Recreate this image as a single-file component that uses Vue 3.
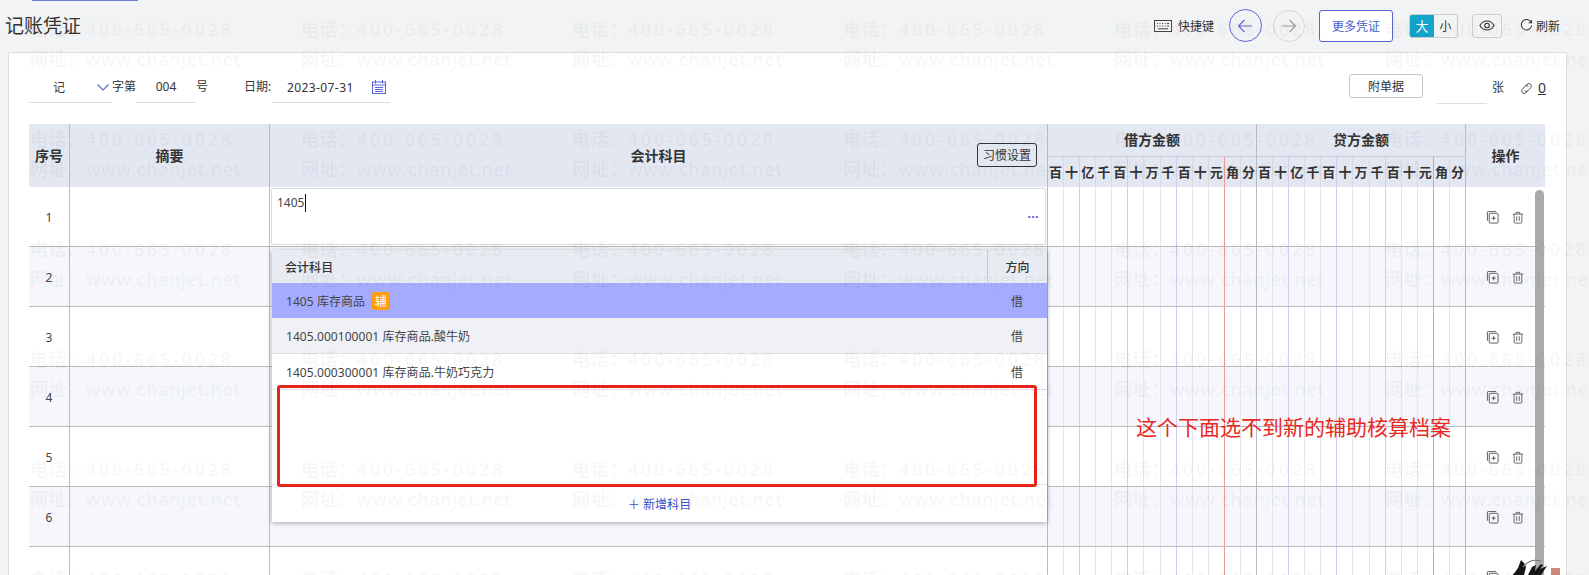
<script setup>
const marks = Array.from({ length: 42 }, (_, i) => i)
const digits = ['百', '十', '亿', '千', '百', '十', '万', '千', '百', '十', '元', '角', '分']
const rows = [1, 2, 3, 4, 5, 6, 7]
const digitClass = (i) => {
  if (i === 12) return 'd-end'
  if (i === 10) return 'd-red'
  if (i === 1 || i === 4 || i === 7) return 'd-purple'
  return ''
}
</script>

<template>
  <div class="page">
    <div class="topline"></div>
    <header class="pagehead">
      <h1 class="title">记账凭证</h1>
      <div class="tools">
        <span class="shortcut">
          <svg class="kb" viewBox="0 0 18 14" width="18" height="14" fill="none" stroke="#444" stroke-width="1">
            <rect x="0.5" y="1.5" width="17" height="11" />
            <path d="M3 4.5h1M5.5 4.5h1M8 4.5h1M10.5 4.5h1M13 4.5h2M3 7h1M5.5 7h1M8 7h1M10.5 7h1M13 7h2M4 9.8h10" />
          </svg>
          快捷键
        </span>
        <button class="circle active">
          <svg viewBox="0 0 16 16" width="16" height="16" fill="none" stroke="#5a64d8" stroke-width="1.1"><path d="M15 8H1.5M7.5 2L1.5 8l6 6" /></svg>
        </button>
        <button class="circle">
          <svg viewBox="0 0 16 16" width="16" height="16" fill="none" stroke="#999" stroke-width="1.1"><path d="M1 8h13.5M8.5 2l6 6-6 6" /></svg>
        </button>
        <button class="more">更多凭证</button>
        <div class="size">
          <span class="on">大</span><span class="off">小</span>
        </div>
        <button class="eye">
          <svg viewBox="0 0 18 12" width="16" height="11" fill="none" stroke="#333" stroke-width="1.2">
            <path d="M1 6c2-3.4 4.8-5 8-5s6 1.6 8 5c-2 3.4-4.8 5-8 5S3 9.4 1 6z" />
            <circle cx="9" cy="6" r="2.6" />
          </svg>
        </button>
        <span class="refresh">
          <svg viewBox="0 0 14 14" width="13" height="13" fill="none" stroke="#333" stroke-width="1.1">
            <path d="M12 3.5A5.6 5.6 0 1 0 12.6 7M12.3 1v3h-3" />
          </svg>
          刷新
        </span>
      </div>
    </header>

    <main class="card">
      <div class="form">
        <div class="f-left">
          <div class="type"><span class="type-val">记</span>
            <svg class="chev" viewBox="0 0 12 7" width="12" height="7" fill="none" stroke="#5a64d8" stroke-width="1.1"><path d="M.5.5L6 6 11.5.5" /></svg>
          </div>
          <span class="lbl zi">字第</span>
          <div class="num">004</div>
          <span class="lbl hao">号</span>
          <span class="lbl date-lbl">日期:</span>
          <div class="date">
            <span class="date-val">2023-07-31</span>
            <svg class="cal" viewBox="0 0 14 14" width="14" height="14" fill="none" stroke="#5a64d8" stroke-width="1">
              <rect x="0.5" y="2" width="13" height="11.5" />
              <path d="M3.5 0v3.500M10.5 0v3.500M.5 5h13M3 7.500h8M3 9.500h8M3 11.500h8" />
            </svg>
          </div>
        </div>
        <div class="f-right">
          <button class="attach">附单据</button>
          <div class="pages"></div>
          <span class="lbl zhang">张</span>
          <svg class="link" viewBox="0 0 14 14" width="13" height="13" fill="none" stroke="#444" stroke-width="1">
            <path d="M6.2 4.2l1.600-1.900a2.600 2.600 0 0 1 3.900 3.400L8.600 9.400a2.400 2.400 0 0 1-3.500-.2" />
            <path d="M7.800 9.800l-1.600 1.900a2.600 2.600 0 0 1-3.900-3.400L5.400 4.600a2.400 2.400 0 0 1 3.500.2" />
          </svg>
          <span class="zero">0</span>
        </div>
      </div>

      <section class="table">
        <div class="thead">
          <div class="th plain">序号</div>
          <div class="th plain">摘要</div>
          <div class="th plain">会计科目<button class="habit">习惯设置</button></div>
          <div v-for="g in ['借方金额', '贷方金额']" :key="g" class="th money-th">
            <div class="money-title">{{ g }}</div>
            <div class="digits">
              <span v-for="(d, i) in digits" :key="i" class="digit" :class="digitClass(i)">{{ d }}</span>
            </div>
          </div>
          <div class="th plain last">操作</div>
        </div>
        <div v-for="r in rows" :key="r" class="tr" :class="{ even: r % 2 === 0 }">
          <div class="td seq">{{ r < 7 ? r : '' }}</div>
          <div class="td"></div>
          <div class="td account">
            <div v-if="r === 1" class="acc-input">
              <span class="typed">1405</span>
              <span class="dots">...</span>
            </div>
          </div>
          <div v-for="m in 2" :key="m" class="td money">
            <span v-for="(d, i) in digits" :key="i" class="cell" :class="digitClass(i)"></span>
          </div>
          <div class="td ops">
            <svg viewBox="0 0 14 14" width="13" height="13" fill="none" stroke="#555" stroke-width="1">
              <path d="M1.5 10.500v-9a1 1 0 0 1 1-1h8.500" />
              <rect x="3.5" y="2.5" width="9.5" height="10.5" rx="1" />
              <path d="M6 7.700h4.500M8.200 5.500v4.500" />
            </svg>
            <svg viewBox="0 0 14 14" width="12" height="13" fill="none" stroke="#555" stroke-width="1">
              <path d="M1 3h12M5 3V1h4v2M2.500 3v9.500a1 1 0 0 0 1 1h7a1 1 0 0 0 1-1V3M5.500 5.500v5.500M8.500 5.500v5.500" />
            </svg>
          </div>
        </div>

        <div class="scroll"></div>

        <div class="dropdown">
          <div class="dd-head"><span>会计科目</span><span class="dd-dir">方向</span></div>
          <div class="dd-row sel">
            <span class="dd-name">1405 库存商品 <i class="badge">辅</i></span><span class="dd-val">借</span>
          </div>
          <div class="dd-row alt">
            <span class="dd-name">1405.000100001 库存商品.酸牛奶</span><span class="dd-val">借</span>
          </div>
          <div class="dd-row">
            <span class="dd-name">1405.000300001 库存商品.牛奶巧克力</span><span class="dd-val">借</span>
          </div>
          <div class="dd-space"></div>
          <div class="dd-foot">＋ 新增科目</div>
        </div>
      </section>
    </main>

    <div class="redbox"></div>
    <div class="note">这个下面选不到新的辅助核算档案</div>

    <svg class="mascot" viewBox="0 0 48 16" width="48" height="16">
      <path d="M1 16l5-7 3-8 3 3 2 4-2 8z" fill="#161616" />
      <path d="M11 8c5-6 11-8 18-6" stroke="#777" stroke-width="1.2" fill="none" />
      <path d="M16 16l4-8 4-2-1 6 6-7 2 1-3 4 7-3-6 9z" fill="#161616" />
      <rect x="39" y="9" width="9" height="7" fill="#c98a7a" />
    </svg>

    <div class="watermark" aria-hidden="true">
      <div v-for="m in marks" :key="m" class="mark">
        <div class="wm-tel"><span class="wm-cjk">电话：</span>400-665-0028</div>
        <div class="wm-web"><span class="wm-cjk">网址：</span>www.chanjet.net</div>
      </div>
    </div>
  </div>
</template>

<style>
html, body { margin: 0; background: #f2f3f5; }
</style>

<style scoped>
.page {
  position: relative;
  width: 1589px;
  height: 575px;
  overflow: hidden;
  background: #f2f3f5;
  display: flex;
  flex-direction: column;
  color: #333;
  font-family: "Noto Sans", "Noto Sans CJK SC", sans-serif;
  font-size: 12px;
}
button { font-family: inherit; padding: 0; cursor: pointer; background: none; }
.topline { flex: none; height: 1px; width: 106px; margin-left: 32px; background: #6f80d4; }
.pagehead { flex: none; height: 51px; display: flex; align-items: center; justify-content: space-between; padding: 0 29px 2px 5px; box-sizing: border-box; }
.title { margin: 0; font-size: 19px; font-weight: 400; color: #333; line-height: 28px; }
.tools { display: flex; align-items: center; }
.shortcut { display: flex; align-items: center; gap: 6px; margin-right: 15px; }
.circle { width: 32px; height: 32px; border-radius: 50%; border: 1px solid #d6d8dc; display: flex; align-items: center; justify-content: center; margin-right: 10px; box-sizing: border-box; }
.circle.active { width: 33px; height: 33px; border-color: #5a64d8; margin-right: 11px; }
.more { width: 74px; height: 32px; border: 1px solid #5a64d8; border-radius: 3px; background: #fff; color: #4a5bc8; font-size: 12px; margin: 0 16px 0 4px; }
.size { display: flex; width: 49px; height: 24px; border: 1px solid #ccc; border-radius: 3px; overflow: hidden; box-sizing: border-box; margin-right: 14px; }
.size span { flex: 1; display: flex; align-items: center; justify-content: center; }
.size .on { background: #12a5c9; color: #fff; font-size: 13px; flex: 0 0 24px; }
.eye { width: 30px; height: 24px; border: 1px solid #ccc; border-radius: 3px; display: flex; align-items: center; justify-content: center; margin-right: 18px; }
.refresh { display: flex; align-items: center; gap: 3px; }

.card { flex: 1; margin: 0 22px 0 8px; background: #fff; border: 1px solid #dcdee2; border-bottom: 0; padding: 0 20px; min-height: 0; }
.form { height: 71px; display: flex; justify-content: space-between; }
.f-left { display: flex; align-items: flex-start; padding-top: 19px; }
.type { width: 83px; height: 31px; border-bottom: 1px solid #ddd; box-sizing: border-box; display: flex; align-items: center; padding-left: 24px; }
.type-val { flex: 1; }
.chev { margin-right: 3px; }
.lbl { line-height: 29px; white-space: nowrap; }
.zi { width: 24px; }
.num { width: 60px; height: 31px; box-sizing: border-box; border-bottom: 1px solid #ddd; text-align: center; line-height: 29px; }
.hao { margin-right: 36px; }
.date-lbl { width: 28px; }
.date { width: 118px; height: 31px; box-sizing: border-box; border-bottom: 1px solid #ddd; display: flex; align-items: center; padding: 0 4px 0 15px; justify-content: space-between; }
.date-val { letter-spacing: 0.4px; }
.f-right { display: flex; align-items: flex-start; padding-top: 21px; position: relative; }
.attach { width: 74px; height: 24px; border: 1px solid #c4c6ca; border-radius: 3px; background: #fff; color: #333; font-size: 12px; margin-right: 14px; }
.pages { width: 50px; height: 30px; border-bottom: 1px solid #ddd; box-sizing: border-box; margin-right: 5px; }
.zhang { margin-right: 16px; line-height: 28px; }
.link { margin-top: 8px; margin-right: 5px; }
.zero { text-decoration: underline; line-height: 27px; font-size: 14px; }

.table { position: relative; width: 1516px; }
.thead, .tr { display: grid; grid-template-columns: 41px 200px 778px 209px 209px 79px; }
.thead { height: 63px; background: #e3e7f2; }
.th { border-right: 1px solid #b8bac0; display: flex; align-items: center; justify-content: center; font-weight: 700; font-size: 14px; color: #333; box-sizing: border-box; position: relative; }
.th.plain { padding-bottom: 2px; }
.th.last { border-right: 0; }
.habit { position: absolute; right: 10px; top: 19px; width: 60px; height: 24px; border: 1px solid #333; border-radius: 3px; font-size: 12px; font-weight: 400; color: #333; background: transparent; }
.money-th { flex-direction: column; align-items: stretch; justify-content: flex-start; }
.money-title { height: 32px; line-height: 31px; text-align: center; border-bottom: 1px solid #c6c9d2; }
.digits { flex: 1; display: flex; }
.digit { flex: 1; text-align: center; line-height: 30px; font-size: 13px; border-right: 1px solid #d8dae2; }
.tr { height: 60px; border-top: 1px solid #b8bac0; box-sizing: border-box; background: #fff; }
.tr.even { background: #f5f7fc; }
.thead + .tr { height: 59px; border-top: 0; }
.td { border-right: 1px solid #b8bac0; box-sizing: border-box; display: flex; align-items: center; justify-content: center; color: #444; }
.td.seq { padding-top: 1px; }
.td.account { padding: 1px; align-items: stretch; }
.acc-input { flex: 1; height: 57px; border: 1px solid #d8dade; border-radius: 2px; background: #fff; position: relative; padding: 5px 5px; box-sizing: border-box; }
.typed { border-right: 1px solid #111; padding-right: 1px; line-height: 18px; display: inline-block; }
.dots { position: absolute; right: 6px; top: 16px; color: #4a55e0; font-weight: 700; letter-spacing: 0.5px; }
.money { align-items: stretch; }
.cell { flex: 1; border-right: 1px solid #e4e6ea; }
.d-purple { border-right-color: #d2cdea; }
.d-red { border-right-color: #e89a9a; }
.d-end { border-right: 0; }
.ops { gap: 13px; border-right: 0; justify-content: flex-start; padding: 2px 0 0 20px; }

.scroll { position: absolute; right: 1px; top: 66px; height: 500px; width: 9px; border-radius: 5px 5px 0 0; background: #aaa; }

.dropdown { position: absolute; left: 243px; top: 126px; width: 775px; height: 272px; background: #fff; box-shadow: 0 1px 5px rgba(0, 0, 0, 0.35); display: flex; flex-direction: column; letter-spacing: 0.06px; color: #444; }
.dd-head { flex: none; height: 33px; background: #e9ebf3; display: flex; align-items: center; justify-content: space-between; padding-left: 13px; font-weight: 500; color: #333; position: relative; }
.dd-dir { width: 60px; height: 100%; display: flex; align-items: center; justify-content: center; border-left: 1px solid #c8cad2; box-sizing: border-box; }
.dd-row { flex: none; height: 36px; display: flex; align-items: center; justify-content: space-between; padding-left: 14px; border-bottom: 1px solid #e2e3e6; box-sizing: border-box; }
.dd-row.sel { height: 35px; background: #a5acff; border-bottom: 0; }
.dd-row.alt { background: #f0f1f6; }
.dd-val { width: 60px; text-align: center; }
.dd-name { display: flex; align-items: center; white-space: pre; }
.badge { display: inline-flex; align-items: center; justify-content: center; width: 19px; height: 18px; margin-left: 3px; background: #ff9d0a; color: #fff; border-radius: 4px; font-style: normal; }
.dd-space { flex: 1; border-bottom: 1px solid #e2e3e6; }
.dd-foot { flex: none; height: 37px; display: flex; align-items: center; justify-content: center; color: #3f4fc8; }

.redbox { position: absolute; left: 277px; top: 385px; width: 760px; height: 102px; box-sizing: border-box; border: 3px solid #e8231a; border-radius: 3px; }
.note { position: absolute; left: 1136px; top: 412px; font-size: 21px; line-height: 30px; color: #e8291f; white-space: nowrap; }
.mascot { position: absolute; left: 1512px; top: 559px; }

.watermark { position: absolute; inset: 0; padding: 15px 0 0 30px; display: grid; grid-template-columns: repeat(7, 271px); grid-auto-rows: 110px; pointer-events: none; font-size: 18px; font-weight: 600; line-height: 29.5px; color: rgba(0, 0, 0, 0.05); white-space: nowrap; font-family: "Open Sans", "Noto Sans CJK SC", sans-serif; }
.wm-cjk { letter-spacing: 0.6px; }
.wm-tel { letter-spacing: 2.8px; }
.wm-web { letter-spacing: 0.5px; }
</style>
